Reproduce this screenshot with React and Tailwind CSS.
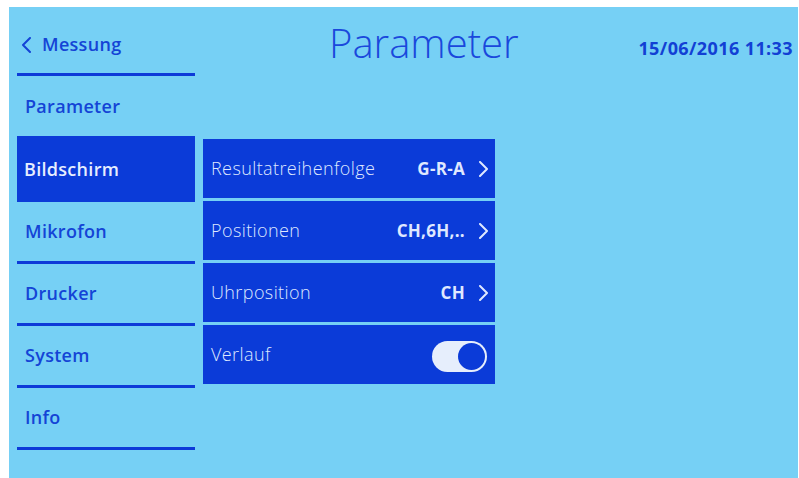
import React from 'react';

const navItems = ['Mikrofon', 'Drucker', 'System', 'Info'];

const rows = [
    { label: 'Resultatreihenfolge', value: 'G-R-A' },
    { label: 'Positionen', value: 'CH,6H,..' },
    { label: 'Uhrposition', value: 'CH' },
];

const Chevron = ({ dir = 'right', className }) => (
    <svg className={className} viewBox="0 0 11 16" fill="none" stroke="currentColor" strokeWidth="2" strokeLinecap="round" strokeLinejoin="round">
        {dir === 'right' ? <path d="M2 1l7 7-7 7" /> : <path d="M9 1L2 8l7 7" />}
    </svg>
);

const App = () => {
    return (
        <div className="w-[799px] h-[478px] bg-white pt-[7px] pl-[9px] pr-[1px] overflow-hidden font-['Open_Sans',sans-serif]">
            <div className="flex h-[471px] bg-[#76d0f5]">
                {/* Left nav */}
                <div className="w-[178px] ml-[8px] flex flex-col text-[18px] font-semibold tracking-[0.3px] text-[#1444d6]">
                    <div className="h-[69px] pt-[9px] flex items-center gap-[10px] pl-[4px] border-b-[3px] border-[#0d3ad8]">
                        <Chevron dir="left" className="w-[11px] h-[16px]" />
                        <span>Messung</span>
                    </div>
                    <div className="h-[60px] flex items-center pl-[8px]">Parameter</div>
                    <div className="h-[66px] flex items-center pl-[7px] bg-[#0b3bd8] text-[#e6eeff]">Bildschirm</div>
                    {navItems.map((item) => (
                        <div key={item} className="h-[62px] flex items-center pl-[8px] border-b-[3px] border-[#0d3ad8]">
                            {item}
                        </div>
                    ))}
                </div>

                {/* Main area */}
                <div className="flex-1 ml-[8px] flex flex-col">
                    <div className="h-[132px] flex items-start">
                        <h1 className="ml-[126px] mt-[12px] text-[40px] leading-[48px] font-light text-[#1a48dc]">
                            Parameter
                        </h1>
                        <div className="ml-auto mr-[5px] mt-[29px] text-[18px] leading-[24px] font-bold tracking-[0.4px] text-[#1240d4]">
                            15/06/2016 11:33
                        </div>
                    </div>

                    <div className="w-[292px] flex flex-col gap-[3px]">
                        {rows.map((row) => (
                            <div key={row.label} className="h-[59px] bg-[#0b3bd8] flex items-center pl-[8px] pr-[6px] text-[#dfe8ff]">
                                <span className="text-[18px] font-light tracking-[0.4px]">{row.label}</span>
                                <span className="ml-auto text-[17px] font-bold tracking-[0.3px]">{row.value}</span>
                                <Chevron className="w-[11px] h-[16px] ml-[13px]" />
                            </div>
                        ))}
                        <div className="h-[59px] bg-[#0b3bd8] flex items-center pl-[8px] pr-[8px] text-[#dfe8ff]">
                            <span className="text-[18px] font-light tracking-[0.4px]">Verlauf</span>
                            <div className="ml-auto mt-[3px] w-[55px] h-[31px] rounded-full bg-[#e6eefc] flex items-center justify-end pr-[2px]">
                                <div className="w-[27px] h-[27px] rounded-full bg-[#0b3bd8]" />
                            </div>
                        </div>
                    </div>
                </div>
            </div>
        </div>
    );
};

export default App;
